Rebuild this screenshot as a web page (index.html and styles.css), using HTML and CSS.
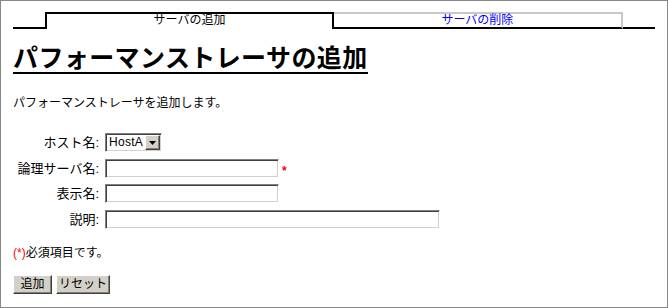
FILE: index.html
```html
<!DOCTYPE html>
<html lang="ja">
<head>
<meta charset="utf-8">
<title>パフォーマンストレーサの追加</title>
<link rel="stylesheet" href="styles.css">
</head>
<body>
<div class="page">
  <div class="tabs">
    <div class="tab-spacer"></div>
    <div class="tab tab-active">サーバの追加</div>
    <div class="tab tab-inactive"><a class="tab-link" href="#">サーバの削除</a></div>
    <div class="tab-spacer"></div>
  </div>

  <h1 class="title"><span class="title-text">パフォーマンストレーサの追加</span></h1>

  <p class="intro">パフォーマンストレーサを追加します。</p>

  <form class="form">
    <div class="fields">
      <label class="label">ホスト名:</label>
      <div class="control">
        <div class="select">
          <span class="select-value">HostA</span>
          <span class="select-arrow"><svg width="7" height="4" viewBox="0 0 7 4"><path d="M0 0h7L3.5 4z" fill="#000"/></svg></span>
        </div>
      </div>

      <label class="label">論理サーバ名:</label>
      <div class="control">
        <input class="input input-mid" type="text">
        <span class="req-mark">*</span>
      </div>

      <label class="label">表示名:</label>
      <div class="control">
        <input class="input input-mid" type="text">
      </div>

      <label class="label">説明:</label>
      <div class="control">
        <input class="input input-wide" type="text">
      </div>
    </div>

    <p class="note"><span class="req">(*)</span>必須項目です。</p>

    <div class="buttons">
      <button class="btn btn-add" type="button">追加</button>
      <button class="btn btn-reset" type="reset">リセット</button>
    </div>
  </form>
</div>
</body>
</html>
```

FILE: styles.css
```css
html, body {
  margin: 0;
  padding: 0;
  background: #fff;
}

body {
  font-family: "Liberation Sans", "Noto Sans CJK JP", sans-serif;
  font-size: 12px;
  color: #000;
}

.page {
  box-sizing: border-box;
  width: 668px;
  height: 308px;
  border: 1px solid #888;
  padding: 11px 12px 0 12px;
}

/* tabs */
.tabs {
  display: flex;
  height: 17px;
}

.tab-spacer {
  box-sizing: border-box;
  flex: 0 0 5%;
  border-bottom: 2px solid #000;
}

.tab {
  box-sizing: border-box;
  flex: 0 0 45%;
  text-align: center;
  line-height: 13px;
  font-size: 12px;
}

.tab-active {
  border-top: 2px solid #000;
  border-left: 2px solid #000;
  border-right: 2px solid #000;
  padding-bottom: 2px;
}

.tab-inactive {
  border-top: 2px solid #c8c8c8;
  border-right: 2px solid #c8c8c8;
  border-bottom: 2px solid #000;
}

.tab-link {
  color: #00f;
  text-decoration: none;
}

/* heading */
.title {
  margin: 16px 0 0 0;
  font-size: 25px;
  line-height: 27px;
  font-weight: bold;
}

.title-text {
  display: inline-block;
  letter-spacing: 0.4px;
  border-bottom: 2px solid #000;
  padding-bottom: 0;
}

.intro {
  margin: 21px 0 0 0;
  line-height: 16px;
}

/* form */
.form {
  margin: 0;
}

.fields {
  display: grid;
  grid-template-columns: 86px auto;
  grid-auto-rows: 19px;
  column-gap: 6px;
  row-gap: 6.5px;
  margin-top: 22px;
}

.label {
  font-size: 13px;
  text-align: right;
  line-height: 19px;
  white-space: nowrap;
}

.control {
  display: flex;
  align-items: center;
}

.input {
  box-sizing: border-box;
  height: 19px;
  margin: 0;
  padding: 0 2px;
  border: 1px solid;
  border-color: #808080 #fff #fff #808080;
  box-shadow: inset 1px 1px 0 #404040, inset -1px -1px 0 #d4d0c8;
  background: #fff;
  font: inherit;
  outline: none;
}

.input-mid {
  width: 174px;
}

.input-wide {
  width: 335px;
}

.req-mark {
  color: #f00;
  font-weight: bold;
  font-size: 12px;
  margin-left: 3px;
  margin-top: 6px;
}

.select {
  box-sizing: border-box;
  display: flex;
  align-items: stretch;
  width: 57px;
  height: 19px;
  border: 1px solid;
  border-color: #808080 #fff #fff #808080;
  box-shadow: inset 1px 1px 0 #404040, inset -1px -1px 0 #d4d0c8;
  padding: 1px;
}

.select-value {
  flex: 1;
  line-height: 15px;
  padding-left: 2px;
  letter-spacing: 0.3px;
}

.select-arrow {
  box-sizing: border-box;
  width: 15px;
  display: flex;
  align-items: center;
  justify-content: center;
  background: #d4d0c8;
  border: 1px solid;
  border-color: #fff #404040 #404040 #fff;
  box-shadow: inset -1px -1px 0 #808080;
}

.note {
  margin: 16px 0 0 0;
  line-height: 16px;
}

.req {
  color: #f00;
}

.buttons {
  display: flex;
  gap: 4px;
  margin-top: 14px;
}

.btn {
  box-sizing: border-box;
  height: 19px;
  margin: 0;
  padding: 0;
  background: #d4d0c8;
  border: 1px solid;
  border-color: #fff #404040 #404040 #fff;
  box-shadow: inset -1px -1px 0 #808080;
  font: inherit;
  font-size: 12px;
  line-height: 15px;
  color: #000;
}

.btn-add {
  width: 39px;
}

.btn-reset {
  width: 54px;
}
```
